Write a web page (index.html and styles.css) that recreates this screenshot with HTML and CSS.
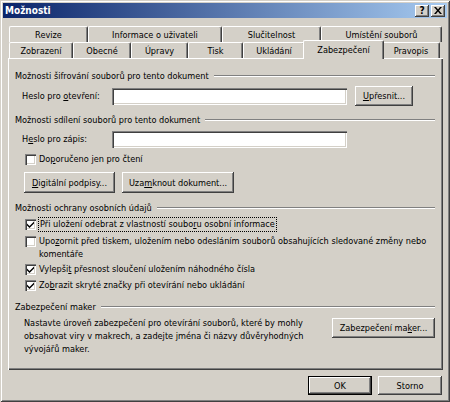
FILE: index.html
```html
<!DOCTYPE html>
<html lang="cs">
<head>
    <meta charset="UTF-8">
    <title>Možnosti</title>
    <link rel="stylesheet" href="styles.css">
</head>
<body>

    <div class="window">
        <!-- Title bar -->
        <div class="titlebar">
            <span class="title">Možnosti</span>
            <span class="title-btns">
                <span class="title-btn help">?</span>
                <span class="title-btn">
                    <svg width="8" height="7" viewBox="0 0 8 7"><path d="M0 0h2l2 2.5L6 0h2L5 3.5 8 7H6L4 4.5 2 7H0l3-3.5z" fill="#000"/></svg>
                </span>
            </span>
        </div>

        <!-- Tabs (two rows) -->
        <div class="tabs">
            <div class="tab-row back">
                <div class="tab t-revize">Revize</div>
                <div class="tab t-info">Informace o uživateli</div>
                <div class="tab t-sluc">Slučitelnost</div>
                <div class="tab t-umist">Umístění souborů</div>
            </div>
            <div class="tab-row front">
                <div class="tab t-zobr">Zobrazení</div>
                <div class="tab t-obec">Obecné</div>
                <div class="tab t-upr">Úpravy</div>
                <div class="tab t-tisk">Tisk</div>
                <div class="tab t-ukl">Ukládání</div>
                <div class="tab t-zab active">Zabezpečení</div>
                <div class="tab t-prav">Pravopis</div>
            </div>
        </div>

        <!-- Tab page -->
        <div class="panel">
            <div class="group g-encrypt">Možnosti šifrování souborů pro tento dokument</div>
            <div class="field-row r-open">
                <span class="field-label">Heslo pro <u>o</u>tevření:</span>
                <span class="textbox"></span>
                <button class="btn b-more"><u>U</u>přesnit...</button>
            </div>

            <div class="group g-share">Možnosti sdílení souborů pro tento dokument</div>
            <div class="field-row r-write">
                <span class="field-label">H<u>e</u>slo pro zápis:</span>
                <span class="textbox"></span>
            </div>
            <div class="check c-readonly">
                <span class="box"></span>
                <span>Do<u>p</u>oručeno jen pro čtení</span>
            </div>
            <div class="btn-row">
                <button class="btn b-sign"><u>D</u>igitální podpisy...</button>
                <button class="btn b-lock">Uza<u>m</u>knout dokument...</button>
            </div>

            <div class="group g-privacy">Možnosti ochrany osobních údajů</div>
            <div class="check c-first">
                <span class="box checked"><svg width="7" height="7" viewBox="0 0 7 7"><path d="M0 2.5l2.5 2.5L7 .5v2L2.5 7 0 4.5z" fill="#000"/></svg></span>
                <span class="focus">Při uložení odebrat z vlastností soubo<u>r</u>u osobní informace</span>
            </div>
            <div class="check c-warn">
                <span class="box"></span>
                <span>Upo<u>z</u>ornit před tiskem, uložením nebo odesláním souborů obsahujících sledované změny nebo<br>komentáře</span>
            </div>
            <div class="check c-merge">
                <span class="box checked"><svg width="7" height="7" viewBox="0 0 7 7"><path d="M0 2.5l2.5 2.5L7 .5v2L2.5 7 0 4.5z" fill="#000"/></svg></span>
                <span>Vylepši<u>t</u> přesnost sloučení uložením náhodného čísla</span>
            </div>
            <div class="check c-marks">
                <span class="box checked"><svg width="7" height="7" viewBox="0 0 7 7"><path d="M0 2.5l2.5 2.5L7 .5v2L2.5 7 0 4.5z" fill="#000"/></svg></span>
                <span>Zo<u>b</u>razit skryté značky při otevírání nebo ukládání</span>
            </div>

            <div class="group g-macro">Zabezpečení maker</div>
            <div class="macro-row">
                <p class="macro-text">Nastavte úroveň zabezpečení pro otevírání souborů, které by mohly<br>obsahovat viry v makrech, a zadejte jména či názvy důvěryhodných<br>vývojářů maker.</p>
                <button class="btn b-macro">Zabezpečení ma<u>k</u>er...</button>
            </div>
        </div>

        <!-- Dialog buttons -->
        <div class="footer">
            <button class="btn b-ok">OK</button>
            <button class="btn b-cancel">Storno</button>
        </div>
    </div>

</body>
</html>
```

FILE: styles.css
```css
/* Classic grey dialog */
body {
    margin: 0;
    background-color: #d4d0c8;
    font-family: Tahoma, "DejaVu Sans Condensed", "Liberation Sans", sans-serif;
    font-size: 9.1px;
    color: #000;
}

u {
    text-decoration: underline;
    text-underline-offset: 1px;
}

.window {
    width: 450px;
    height: 402px;
    box-sizing: border-box;
    padding: 3px;
    background-color: #d4d0c8;
    box-shadow: inset 1px 1px #d4d0c8, inset -1px -1px #404040,
                inset 2px 2px #fff, inset -2px -2px #808080;
}

/* Title bar */
.titlebar {
    height: 15px;
    display: flex;
    align-items: center;
    justify-content: space-between;
    padding: 0 2px;
    background: linear-gradient(to right, #0a246a, #a6caf0);
}

.title {
    color: #fff;
    font-weight: bold;
    font-size: 10px;
}

.title-btns {
    display: flex;
    gap: 2px;
}

.title-btn {
    width: 14px;
    height: 12px;
    box-sizing: border-box;
    display: flex;
    align-items: center;
    justify-content: center;
    background-color: #d4d0c8;
    box-shadow: inset -1px -1px #404040, inset 1px 1px #fff, inset -2px -2px #808080;
    font-weight: bold;
    font-size: 10px;
    line-height: 12px;
}

/* Tabs */
.tabs {
    margin: 8px 0 0 6px;
}

.tab-row {
    display: flex;
    height: 16px;
    align-items: flex-end;
}

.tab {
    box-sizing: border-box;
    height: 16px;
    display: flex;
    align-items: center;
    justify-content: center;
    white-space: nowrap;
    background-color: #d4d0c8;
    border-left: 1px solid #fff;
    border-top: 1px solid #fff;
    border-right: 1px solid #404040;
    border-radius: 2px 2px 0 0;
    box-shadow: inset -1px 0 #808080;
}

.tab.active {
    position: relative;
    z-index: 2;
    height: 19px;
    margin: 0 -2px -1px -2px;
}

.t-revize { width: 79px; }
.t-info { width: 134px; }
.t-sluc { width: 99px; }
.t-umist { width: 121px; }

.t-zobr { width: 64px; }
.t-obec { width: 58px; }
.t-upr { width: 57px; }
.t-tisk { width: 55px; }
.t-ukl { width: 62px; }
.t-zab { width: 81px; }
.t-prav { width: 58px; }

/* Tab page */
.panel {
    margin-left: 5px;
    width: 435px;
    height: 312px;
    box-sizing: border-box;
    padding: 11px 8px 0 7px;
    box-shadow: inset 1px 1px #fff, inset -1px -1px #404040, inset -2px -2px #808080;
}

.group {
    display: flex;
    align-items: center;
    gap: 5px;
    height: 13px;
    white-space: nowrap;
}

.group::after {
    content: "";
    flex: 1;
    border-top: 1px solid #808080;
    border-bottom: 1px solid #fff;
}

.g-share { margin-top: 7px; }
.g-privacy { margin-top: 8px; }
.g-macro { margin-top: 8px; }

.field-row {
    display: flex;
    align-items: center;
    height: 20px;
    padding-left: 7px;
}

.r-open { margin-top: 4px; }
.r-write { margin-top: 3px; }

.field-label {
    width: 90px;
}

.textbox {
    width: 235px;
    height: 17px;
    box-sizing: border-box;
    background-color: #fff;
    box-shadow: inset 1px 1px #808080, inset 2px 2px #404040,
                inset -1px -1px #fff, inset -2px -2px #d4d0c8;
}

/* Buttons */
.btn {
    font: inherit;
    color: #000;
    height: 20px;
    padding: 0;
    border: none;
    white-space: nowrap;
    background-color: #d4d0c8;
    box-shadow: inset -1px -1px #404040, inset 1px 1px #fff,
                inset -2px -2px #808080, inset 2px 2px #d4d0c8;
}

.b-more {
    margin-left: 8px;
    width: 58px;
}

.btn-row {
    display: flex;
    gap: 7px;
    margin: 6px 0 0 9px;
}

.btn-row .btn {
    height: 21px;
}

.b-sign { width: 91px; }
.b-lock { width: 112px; }

/* Checkboxes */
.check {
    display: flex;
    align-items: flex-start;
    gap: 3px;
    padding-left: 10px;
    line-height: 13px;
    white-space: nowrap;
}

.c-readonly { margin-top: 4px; }
.c-first { margin-top: 4px; }
.c-warn { margin-top: 4px; }
.c-merge { margin-top: 2px; }
.c-marks { margin-top: 3px; }

.box {
    flex: none;
    width: 11px;
    height: 11px;
    margin-top: 1px;
    box-sizing: border-box;
    display: flex;
    align-items: center;
    justify-content: center;
    background-color: #fff;
    box-shadow: inset 1px 1px #808080, inset 2px 2px #404040,
                inset -1px -1px #fff, inset -2px -2px #d4d0c8;
}

.focus {
    outline: 1px dotted #000;
    outline-offset: 0;
    padding: 0 1px;
}

/* Macro security */
.macro-row {
    display: flex;
    align-items: flex-start;
    justify-content: space-between;
    margin-top: 4px;
    padding-left: 9px;
}

.macro-text {
    margin: 0;
    line-height: 13px;
    white-space: nowrap;
}

.b-macro {
    margin-top: 1px;
    width: 103px;
}

/* Dialog buttons */
.footer {
    display: flex;
    justify-content: flex-end;
    gap: 6px;
    margin: 6px 5px 0 0;
}

.footer .btn {
    width: 64px;
    height: 19px;
}

.b-ok {
    box-shadow: inset 0 0 0 1px #000, inset -2px -2px #404040, inset 2px 2px #fff,
                inset -3px -3px #808080;
}
```
